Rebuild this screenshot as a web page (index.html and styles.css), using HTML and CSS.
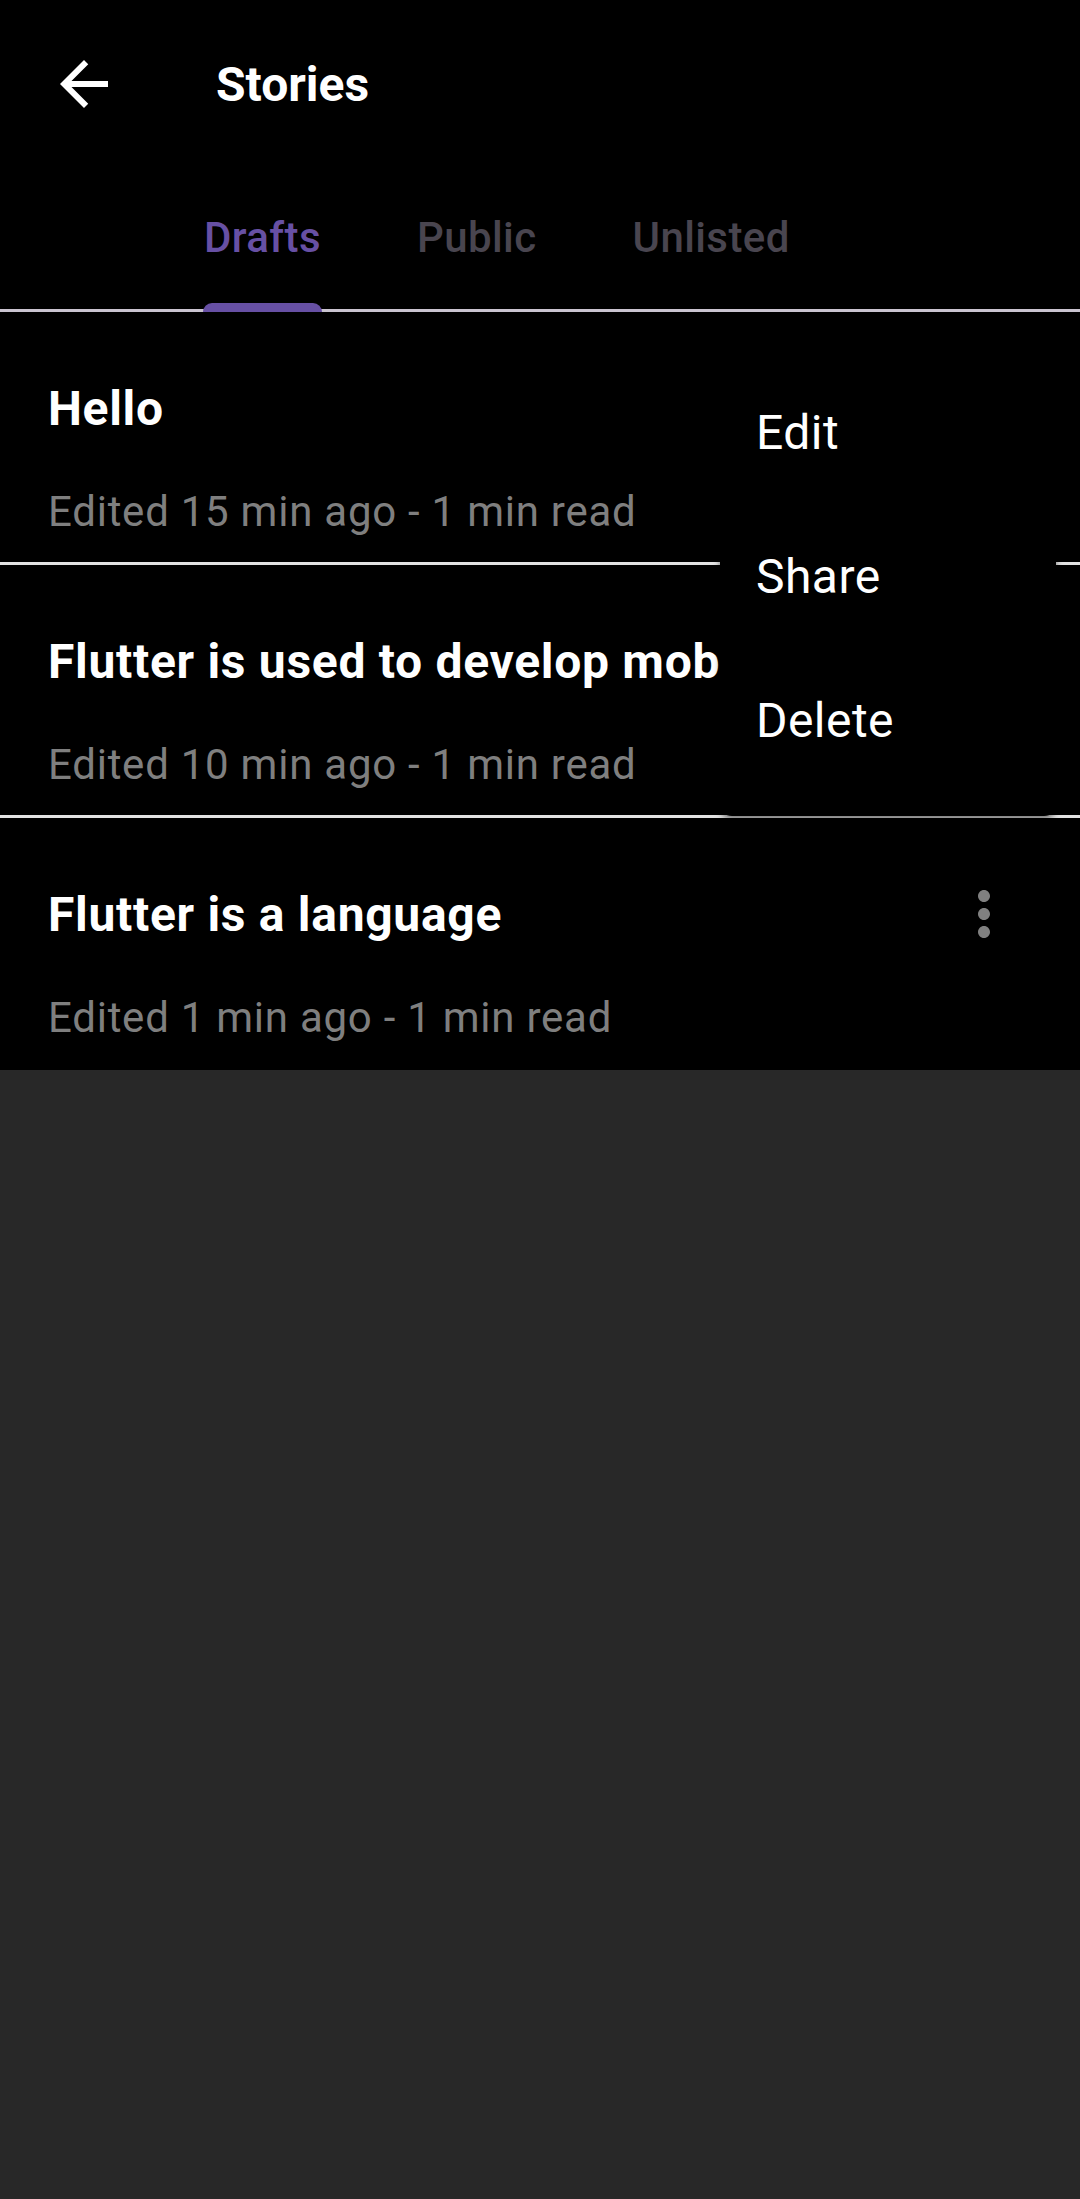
FILE: index.html
```html
<!DOCTYPE html>
<html lang="en">
<head>
<meta charset="utf-8">
<title>Stories</title>
<link rel="stylesheet" href="styles.css">
</head>
<body>
<div class="screen">
  <header class="appbar">
    <button class="leading" aria-label="Back">
      <svg viewBox="0 0 24 24" width="72" height="72"><path fill="#ffffff" d="M20 11H7.83l5.59-5.59L12 4l-8 8 8 8 1.41-1.41L7.83 13H20v-2z"/></svg>
    </button>
    <h1 class="title">Stories</h1>
  </header>

  <nav class="tabbar">
    <div class="tab active"><span class="tab-label">Drafts</span></div>
    <div class="tab"><span class="tab-label">Public</span></div>
    <div class="tab"><span class="tab-label">Unlisted</span></div>
  </nav>

  <section class="list">
    <article class="story">
      <div class="story-head">
        <div class="story-title">Hello</div>
        <div class="more"><svg viewBox="0 0 24 24" width="72" height="72"><path fill="#808080" d="M12 8c1.1 0 2-.9 2-2s-.9-2-2-2-2 .9-2 2 .9 2 2 2zm0 2c-1.1 0-2 .9-2 2s.9 2 2 2 2-.9 2-2-.9-2-2-2zm0 6c-1.1 0-2 .9-2 2s.9 2 2 2 2-.9 2-2-.9-2-2-2z"/></svg></div>
      </div>
      <div class="story-meta">Edited 15 min ago - 1 min read</div>
    </article>
    <article class="story">
      <div class="story-head">
        <div class="story-title">Flutter is used to develop mobile applications</div>
        <div class="more"><svg viewBox="0 0 24 24" width="72" height="72"><path fill="#808080" d="M12 8c1.1 0 2-.9 2-2s-.9-2-2-2-2 .9-2 2 .9 2 2 2zm0 2c-1.1 0-2 .9-2 2s.9 2 2 2 2-.9 2-2-.9-2-2-2zm0 6c-1.1 0-2 .9-2 2s.9 2 2 2 2-.9 2-2-.9-2-2-2z"/></svg></div>
      </div>
      <div class="story-meta">Edited 10 min ago - 1 min read</div>
    </article>
    <article class="story last">
      <div class="story-head">
        <div class="story-title">Flutter is a language</div>
        <div class="more"><svg viewBox="0 0 24 24" width="72" height="72"><path fill="#808080" d="M12 8c1.1 0 2-.9 2-2s-.9-2-2-2-2 .9-2 2 .9 2 2 2zm0 2c-1.1 0-2 .9-2 2s.9 2 2 2 2-.9 2-2-.9-2-2-2zm0 6c-1.1 0-2 .9-2 2s.9 2 2 2 2-.9 2-2-.9-2-2-2z"/></svg></div>
      </div>
      <div class="story-meta">Edited 1 min ago - 1 min read</div>
    </article>

    <div class="menu" role="menu">
      <div class="menu-item">Edit</div>
      <div class="menu-item">Share</div>
      <div class="menu-item">Delete</div>
    </div>
  </section>
</div>
</body>
</html>
```

FILE: styles.css
```css
* { box-sizing: border-box; }

html, body {
  margin: 0;
  padding: 0;
  background: #282828;
  font-family: Roboto, "Liberation Sans", Arial, sans-serif;
  color: #ffffff;
}

.screen {
  width: 1080px;
  min-height: 2199px;
  background: #282828;
}

.appbar {
  height: 168px;
  background: #000000;
  display: flex;
  align-items: center;
}

.leading {
  width: 168px;
  height: 168px;
  padding: 0;
  margin: 0;
  border: 0;
  background: transparent;
  display: flex;
  align-items: center;
  justify-content: center;
}

.leading svg { display: block; }

.title {
  margin: 0 0 0 48px;
  font-size: 48px;
  font-weight: 700;
  line-height: normal;
  color: #ffffff;
}

.tabbar {
  display: flex;
  height: 144px;
  padding-left: 156px;
  background: #000000;
  border-bottom: 3px solid #cac4d0;
}

.tab {
  position: relative;
  height: 138px;
  padding: 0 48px;
  display: flex;
  align-items: center;
  font-size: 42px;
  font-weight: 500;
  letter-spacing: 0.4px;
  line-height: normal;
  color: #49454f;
}

.tab.active { color: #6750a4; }

.tab.active::after {
  content: "";
  position: absolute;
  left: 47px;
  right: 47px;
  bottom: -6px;
  height: 9px;
  background: #6750a4;
  border-radius: 9px 9px 0 0;
}

.list {
  position: relative;
  background: #000000;
}

.story {
  height: 253px;
  padding: 24px 24px 0 48px;
  border-bottom: 3px solid #e2e2e2;
}

.story.last {
  height: 252px;
  border-bottom: 0;
}

.story-head {
  display: flex;
  align-items: center;
  height: 144px;
}

.story-title {
  flex: 1;
  min-width: 0;
  font-size: 48px;
  font-weight: 700;
  letter-spacing: 0.7px;
  line-height: normal;
  white-space: nowrap;
  overflow: hidden;
  text-overflow: ellipsis;
  color: #ffffff;
}

.more {
  width: 144px;
  height: 144px;
  flex: none;
  display: flex;
  align-items: center;
  justify-content: center;
}

.more svg { display: block; }

.story-meta {
  margin-top: 7px;
  font-size: 42px;
  font-weight: 400;
  letter-spacing: 0.75px;
  line-height: normal;
  color: #7f7f7f;
}

.menu {
  position: absolute;
  top: 24px;
  left: 720px;
  width: 336px;
  padding: 24px 0;
  background: #000000;
  border-radius: 12px;
  box-shadow: 0 3px 6px rgba(0, 0, 0, 0.5);
}

.menu-item {
  height: 144px;
  padding: 0 36px;
  display: flex;
  align-items: center;
  font-size: 48px;
  font-weight: 400;
  letter-spacing: 0.45px;
  line-height: normal;
  color: #ffffff;
}
```
